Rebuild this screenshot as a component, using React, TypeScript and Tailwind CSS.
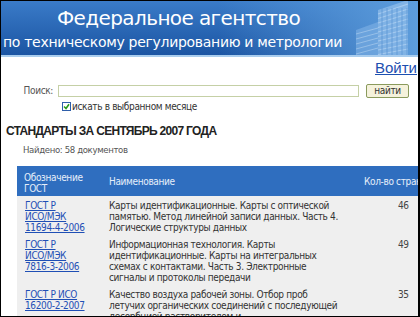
// Страница стандартов: шапка агентства, поиск и таблица документов
import React from 'react';

const rows = [
  {
    code: ['ГОСТ Р', 'ИСО/МЭК', '11694-4-2006'],
    name: 'Карты идентификационные. Карты с оптической памятью. Метод линейной записи данных. Часть 4. Логические структуры данных',
    pages: 46,
  },
  {
    code: ['ГОСТ Р', 'ИСО/МЭК', '7816-3-2006'],
    name: 'Информационная технология. Карты идентификационные. Карты на интегральных схемах с контактами. Часть 3. Электронные сигналы и протоколы передачи',
    pages: 49,
  },
  {
    code: ['ГОСТ Р ИСО', '16200-2-2007'],
    name: 'Качество воздуха рабочей зоны. Отбор проб летучих органических соединений с последующей десорбцией растворителем и',
    pages: 35,
  },
];

const font = { fontFamily: '"DejaVu Sans Condensed", "DejaVu Sans", sans-serif' };
const headFont = { fontFamily: '"DejaVu Sans ExtraLight", "DejaVu Sans", sans-serif' };
const wideFont = { fontFamily: '"Liberation Sans", Arial, sans-serif' };

// здание справа в шапке
const Building: React.FC = () => (
  <svg width="70" height="55" viewBox="0 0 70 55" className="opacity-60">
    <polygon points="8,55 8,30 30,22 30,55" fill="#7fb2e6" />
    <polygon points="30,55 30,10 60,0 60,55" fill="#9cc6ef" />
    {Array.from({ length: 10 }).map((_, i) => (
      <line key={i} x1="30" y1={14 + i * 4.5} x2="60" y2={4 + i * 5} stroke="#d8ecff" strokeWidth="1.2" />
    ))}
    {Array.from({ length: 6 }).map((_, i) => (
      <line key={'v' + i} x1={34 + i * 5} y1="8" x2={34 + i * 5} y2="55" stroke="#5f97d4" strokeWidth="0.8" />
    ))}
    {Array.from({ length: 5 }).map((_, i) => (
      <line key={'s' + i} x1="8" y1={34 + i * 5} x2="30" y2={28 + i * 5} stroke="#c6e0f8" strokeWidth="1" />
    ))}
  </svg>
);

export default function App() {
  return (
    <div
      className="w-[420px] h-[317px] overflow-hidden bg-white border-t border-l border-b border-r-2 border-black tracking-[-0.35px]"
      style={font}
    >
      {/* шапка */}
      <div className="relative h-[56px] bg-gradient-to-b from-[#3a7bc8] to-[#1b55a3] border-b-2 border-[#a9cdee]">
        <div className="absolute inset-y-0 right-0 w-[200px] bg-gradient-to-r from-transparent to-[#5d9ddc]" />
        <div className="relative pl-[56px] pt-[5px] text-[20px] leading-[24px] text-white tracking-[-0.6px]" style={headFont}>
          Федеральное агентство
        </div>
        <div className="relative pl-[2px] pt-[4px] text-[14px] leading-[17px] text-white tracking-[-0.3px]" style={headFont}>
          по техническому регулированию и метрологии
        </div>
        <div className="absolute right-0 bottom-0">
          <Building />
        </div>
      </div>

      {/* вход */}
      <div className="flex justify-end pr-[1px] pt-[2px]">
        <a href="#" className="text-[15px] leading-[17px] tracking-normal text-[#1c4fb0] underline" style={wideFont}>
          Войти
        </a>
      </div>

      {/* поиск */}
      <div className="flex items-center pt-[7px]">
        <span className="w-[57px] text-right pr-[5px] text-[10px] text-[#555]">Поиск:</span>
        <div className="w-[301px] h-[12px] border border-[#c5d0a6] bg-white" />
        <button className="ml-[7px] h-[14px] w-[43px] rounded-[2px] border border-[#8a9a5c] bg-[#f5f2dc] text-[10px] leading-[12px] text-[#333]">
          найти
        </button>
      </div>
      <div className="flex items-center pl-[61px] mt-[3px]">
        <span className="w-[9px] h-[9px] border border-[#2f5faa] bg-white flex items-center justify-center">
          <svg width="7" height="7" viewBox="0 0 7 7">
            <path d="M1 3.5 L3 5.5 L6 1.2" stroke="#2a9a1a" strokeWidth="1.6" fill="none" />
          </svg>
        </span>
        <span className="ml-[1px] text-[10px] leading-[11px] text-[#333]">искать в выбранном месяце</span>
      </div>

      {/* заголовок */}
      <div className="pl-[5px] pt-[12px] text-[12px] leading-[14px] text-[#222] font-bold tracking-[-0.7px]" style={wideFont}>
        СТАНДАРТЫ ЗА СЕНТЯБРЬ 2007 ГОДА
      </div>
      <div className="pl-[22px] pt-[6px] text-[9.5px] leading-[12px] text-[#555]">Найдено: 58 документов</div>

      {/* таблица */}
      <div className="ml-[16px] mt-[10px] w-[440px] text-[10px] leading-[11px]">
        <div className="grid grid-cols-[86px_257px_97px] bg-[#2f6ebf] text-[#e6eefa] h-[30px]">
          <div className="pl-[7px] pt-[6px]">Обозначение<br />ГОСТ</div>
          <div className="pl-[6px] pt-[10px]">Наименование</div>
          <div className="pl-[4px] pt-[10px] whitespace-nowrap">Кол-во страниц</div>
        </div>
        {rows.map((r) => (
          <div key={r.code.join()} className="grid grid-cols-[86px_257px_97px] bg-[#efefef] pt-[4px] pb-[2px]">
            <div className="pl-[8px]">
              {r.code.map((c) => (
                <div key={c}>
                  <a href="#" className="text-[#1f4fb5] underline">{c}</a>
                </div>
              ))}
            </div>
            <div className="pl-[6px] pr-[20px] text-[#333]">{r.name}</div>
            <div className="text-[#444] pl-[38px]">{r.pages}</div>
          </div>
        ))}
      </div>
    </div>
  );
}
